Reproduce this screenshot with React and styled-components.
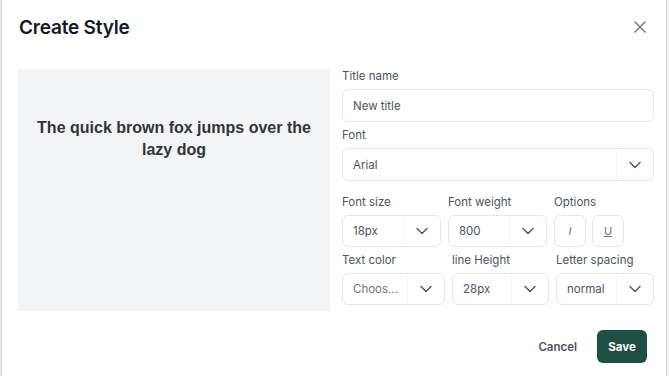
import React from 'react';
import styled, { createGlobalStyle } from 'styled-components';

const border = "#e5e7eb"
const text = "#4b5563"
const muted = "#4b5563"
const brand = "#1f4e44"

const Global = createGlobalStyle`
  body {
    margin: 0;
    background: #fff;
    font-family: Inter, 'Noto Sans', sans-serif;
  }
`
const Modal = styled.div`
  width: 664px;
  height: 376px;
  margin-left: 2px;
  background: #fff;
  box-shadow: 0 0 2px 1px rgba(0, 0, 0, .25);
  display: flex;
  flex-direction: column;
`
const Header = styled.div`
  display: flex;
  align-items: center;
  justify-content: space-between;
  height: 54px;
  padding: 0 20px 0 17px;
`
const Title = styled.h2`
  margin: 0;
  font-size: 19px;
  font-weight: 600;
  color: #111827;
  letter-spacing: -0.2px;
`
const Close = styled.button`
  border: 0;
  background: none;
  padding: 0;
  display: flex;
  color: #6b7280;
`
const Body = styled.div`
  display: grid;
  grid-template-columns: 312px 312px;
  gap: 12px;
  padding: 15px 0 0 16px;
`
const Preview = styled.div`
  height: 242px;
  background: #f3f4f6;
  padding: 48px 18px 0;
  box-sizing: border-box;
  text-align: center;
  font-family: 'Liberation Sans', Arial, sans-serif;
  font-size: 16px;
  font-weight: 800;
  line-height: 22px;
  color: #333338;
`
const Form = styled.div`
  display: flex;
  flex-direction: column;
`
const Row = styled.div`
  display: grid;
  grid-template-columns: ${p => p.$cols};
  gap: 7px;
  margin-top: ${p => p.$top || 0}px;
`
const Field = styled.div`
  display: flex;
  flex-direction: column;
  margin-top: ${p => p.$top || 0}px;
`
const Label = styled.label`
  font-size: 11.5px;
  line-height: 14px;
  color: ${muted};
  margin-bottom: 6px;
`
const Input = styled.div`
  height: 33px;
  box-sizing: border-box;
  border: 1px solid ${border};
  border-radius: 6px;
  display: flex;
  align-items: center;
  padding-left: 10px;
  font-size: 11.5px;
  color: ${text};
`
const SelectBox = styled.div`
  height: ${p => p.$h || 32}px;
  box-sizing: border-box;
  border: 1px solid ${border};
  border-radius: 6px;
  display: flex;
  align-items: stretch;
  font-size: 11.5px;
  color: ${p => p.$placeholder ? "#6b7280" : text};
`
const SelectValue = styled.span`
  flex: 1;
  display: flex;
  align-items: center;
  padding-left: 10px;
  white-space: nowrap;
  overflow: hidden;
`
const Caret = styled.span`
  width: 36px;
  border-left: 1px solid #f3f4f6;
  display: flex;
  align-items: center;
  justify-content: center;
  color: ${muted};
`
const Options = styled.div`
  display: flex;
  gap: 6px;
`
const Toggle = styled.button`
  width: 32px;
  height: 32px;
  border: 1px solid ${border};
  border-radius: 6px;
  background: #fff;
  color: #6b7280;
  font-family: Inter, sans-serif;
  font-size: 11px;
  font-style: ${p => p.$italic ? "italic" : "normal"};
  text-decoration: ${p => p.$underline ? "underline" : "none"};
  padding: 0;
`
const Footer = styled.div`
  display: flex;
  justify-content: flex-end;
  align-items: center;
  gap: 20px;
  padding: 19px 19px 0 0;
`
const Cancel = styled.button`
  border: 0;
  background: none;
  font-family: Inter, sans-serif;
  font-size: 11.5px;
  font-weight: 600;
  color: ${muted};
  padding: 0;
`
const Save = styled.button`
  width: 50px;
  height: 33px;
  border: 0;
  border-radius: 6px;
  background: ${brand};
  color: #fff;
  font-family: Inter, sans-serif;
  font-size: 11.5px;
  font-weight: 700;
  padding: 0;
`

const Chevron = () => (
  <svg width="12" height="8" viewBox="0 0 12 8" fill="none">
    <path d="M1 1.5l5 5 5-5" stroke="currentColor" strokeWidth="1.4" strokeLinecap="round" strokeLinejoin="round" />
  </svg>
)

const Select = ({ value, placeholder, h }) => (
  <SelectBox $placeholder={placeholder} $h={h}>
    <SelectValue>{value}</SelectValue>
    <Caret><Chevron /></Caret>
  </SelectBox>
)

export default function App() {
  return <>
    <Global />
    <Modal>
      <Header>
        <Title>Create Style</Title>
        <Close>
          <svg width="12" height="12" viewBox="0 0 12 12">
            <path d="M1 1l10 10M11 1L1 11" stroke="currentColor" strokeWidth="1.4" strokeLinecap="round" />
          </svg>
        </Close>
      </Header>
      <Body>
        <Preview>The quick brown fox jumps over the lazy dog</Preview>
        <Form>
          <Field>
            <Label>Title name</Label>
            <Input>New title</Input>
          </Field>
          <Field $top={6}>
            <Label>Font</Label>
            <Select value="Arial" h={33} />
          </Field>
          <Row $cols="99px 99px 70px" $top={14}>
            <Field>
              <Label>Font size</Label>
              <Select value="18px" />
            </Field>
            <Field>
              <Label>Font weight</Label>
              <Select value="800" />
            </Field>
            <Field>
              <Label>Options</Label>
              <Options>
                <Toggle $italic>I</Toggle>
                <Toggle $underline>U</Toggle>
              </Options>
            </Field>
          </Row>
          <Row $cols="103px 97px 98px" $top={6}>
            <Field>
              <Label>Text color</Label>
              <Select value="Choos..." placeholder />
            </Field>
            <Field>
              <Label>line Height</Label>
              <Select value="28px" />
            </Field>
            <Field>
              <Label>Letter spacing</Label>
              <Select value="normal" />
            </Field>
          </Row>
        </Form>
      </Body>
      <Footer>
        <Cancel>Cancel</Cancel>
        <Save>Save</Save>
      </Footer>
    </Modal>
  </>
}
